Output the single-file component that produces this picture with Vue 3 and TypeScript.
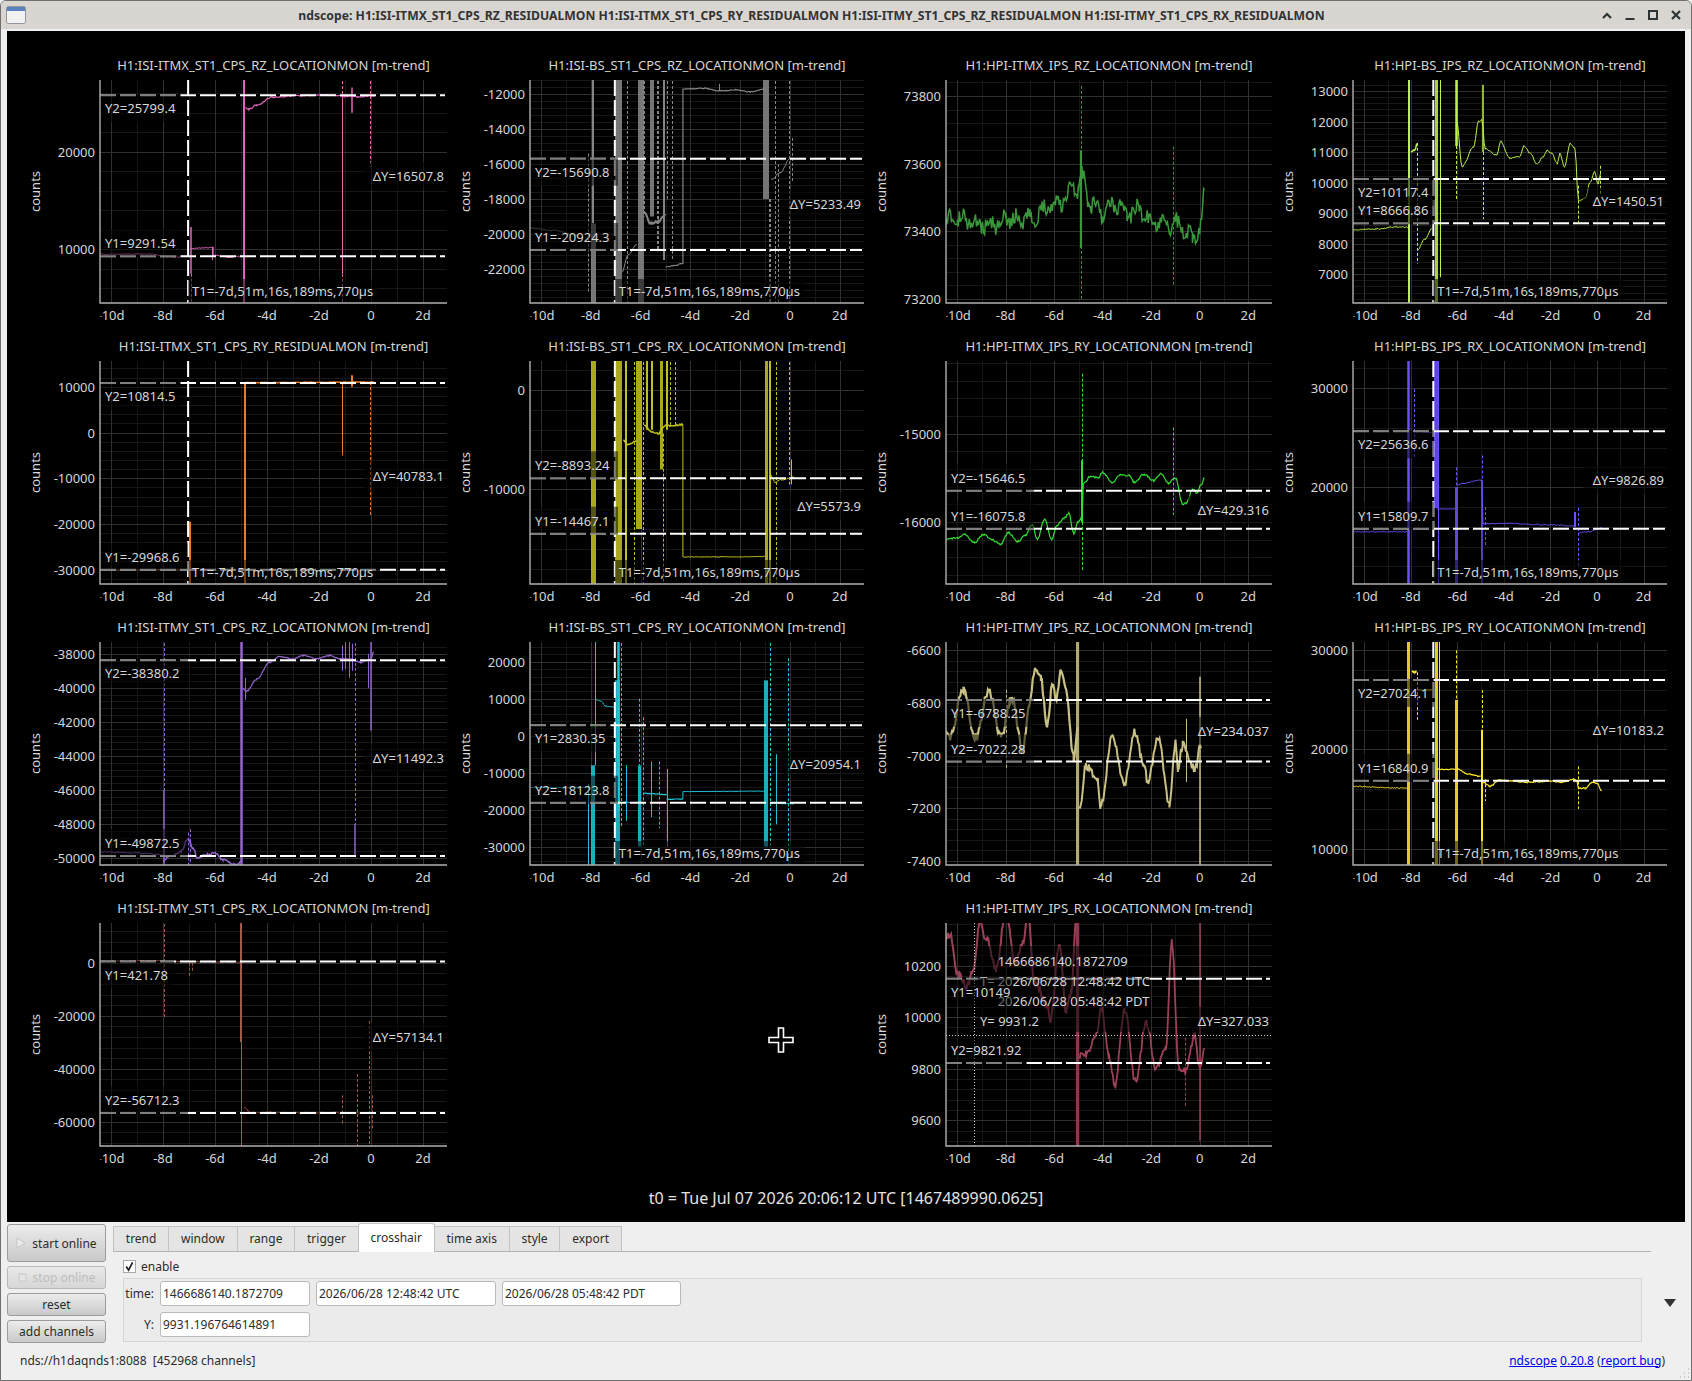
<script setup lang="ts">
type Pt = [number, number]
interface Line { p: Pt[]; n?: number; w?: number; o?: number; r?: number }
// day, high value, low value, width, dashed
type Spike = [number, number, number, number?, number?]
interface YLabel { t: string; y: number; above: boolean }
interface Spec {
  title: string
  color: string
  row: number
  col: number
  y: [Pt, Pt]
  step: number
  lines: Line[]
  spikes: Spike[]
  y1?: YLabel
  y2?: YLabel
  dy?: string
  t1?: boolean
  cross?: boolean
}

const T = 1e9
const B = -1e9
const tabs = ['trend', 'window', 'range', 'trigger', 'crosshair', 'time axis', 'style', 'export']

const cols = [
  { l: 7, w: 453, fl: 100, fr: 447, zero: 371, day: 26 },
  { l: 460, w: 416, fl: 530, fr: 864, zero: 790, day: 24.9 },
  { l: 876, w: 407, fl: 946, fr: 1272, zero: 1199.7, day: 24.24 },
  { l: 1283, w: 402, fl: 1353, fr: 1667, zero: 1597, day: 23.27 }
]

const specs: Spec[] = [
  {
    title: 'H1:ISI-ITMX_ST1_CPS_RZ_LOCATIONMON', color: '#e264bd', row: 0, col: 0,
    y: [[25799.4, 95.3], [9291.54, 256.3]], step: 10000,
    y1: { t: 'Y1=9291.54', y: 256.3, above: true }, y2: { t: 'Y2=25799.4', y: 95.3, above: false },
    dy: 'ΔY=16507.8', t1: true,
    lines: [
      { p: [[-10.85, 9500], [-8.5, 9520], [-7.8, 9250], [-7.1, 9300]], n: 110 },
      { p: [[-6.95, 10100], [-6.07, 10200], [-6.07, 9400], [-5.5, 9200], [-4.9, 9300]], n: 110 },
      { p: [[-4.83, 24600], [-4.7, 24350], [-4.4, 24800], [-3.8, 25600], [-3, 25750], [-1.5, 25850], [-1, 25700], [-0.5, 25650], [0.15, 25750]], n: 130, w: 1.2 }
    ],
    spikes: [[-4.87, T, B, 2], [-6.92, 12300, 7500, 1.5], [-6.92, 7500, B, 1, 1], [-1.1, T, 25500, 1, 1], [-1.1, 25500, 7500, 1], [-1.1, 8000, B, 1, 1], [-0.05, T, 18500, 1, 1], [-0.75, 26600, 24000, 1.5], [-6.1, 10200, 8900, 1]]
  },
  {
    title: 'H1:ISI-BS_ST1_CPS_RZ_LOCATIONMON', color: '#858585', row: 0, col: 1,
    y: [[-15690.8, 158.7], [-20924.3, 250]], step: 2000,
    y1: { t: 'Y1=-20924.3', y: 250, above: true }, y2: { t: 'Y2=-15690.8', y: 158.7, above: false },
    dy: 'ΔY=5233.49', t1: true,
    lines: [
      { p: [[-10.85, -19600], [-9.5, -19800], [-8.5, -20100]], n: 60 },
      { p: [[-6.75, -22200], [-6.5, -21200], [-6.15, -20600]], n: 40 },
      { p: [[-5.85, -18800], [-5.6, -19400], [-5.3, -19300], [-5, -18900]], n: 90, w: 2 },
      { p: [[-5, -21900], [-4.6, -21800], [-4.3, -21700], [-4.3, -11700], [-3.5, -11650], [-2.8, -11800], [-2.2, -11750], [-1.6, -11850], [-1, -11700]], n: 50, w: 1.2 },
      { p: [[-0.75, -16900], [-0.4, -16500], [0, -15700], [0.15, -15650]], n: 60 }
    ],
    spikes: [[-7.9, -19400, B, 5], [-7.9, T, -19400, 2], [-8.1, -15400, -23300, 1, 1], [-6.9, T, B, 7], [-6.55, T, B, 1, 1], [-6, T, B, 6], [-5.85, T, -19000, 2, 1], [-5.55, T, -19000, 4], [-5.3, T, -21000, 2, 1], [-5.05, T, -21500, 2], [-4.95, T, -18000, 1, 1], [-4.75, T, -21500, 1, 1], [-0.95, T, -18000, 6], [-0.8, -18000, B, 2, 1], [-0.6, T, B, 1, 1], [-0.5, -16000, B, 1, 1], [-0.05, T, B, 1, 1], [0.1, -14500, -17000, 1, 1], [-2.85, -11400, -11800, 1]]
  },
  {
    title: 'H1:HPI-ITMX_IPS_RZ_LOCATIONMON', color: '#3a983a', row: 0, col: 2,
    y: [[73800, 96], [73200, 299]], step: 200,
    lines: [
      { p: [[-10.85, 73400], [-10, 73440], [-9, 73420], [-8, 73430], [-7, 73440], [-6, 73470], [-5, 73530], [-4.9, 73560], [-4.5, 73480], [-4, 73460], [-3.5, 73480], [-3, 73450], [-2.5, 73460], [-2, 73430], [-1, 73420], [-0.3, 73380], [0, 73400], [0.2, 73510]], n: 46, w: 1.5, r: 16 }
    ],
    spikes: [[-4.9, 73830, 73200, 1, 1], [-4.9, 73640, 73350, 2], [-1.1, 73650, 73240, 1, 1]]
  },
  {
    title: 'H1:HPI-BS_IPS_RZ_LOCATIONMON', color: '#bcf24e', row: 0, col: 3,
    y: [[10117.4, 179], [8666.86, 223.3]], step: 1000,
    y1: { t: 'Y1=8666.86', y: 223.3, above: true }, y2: { t: 'Y2=10117.4', y: 179, above: false },
    dy: 'ΔY=1450.51', t1: true,
    lines: [
      { p: [[-10.85, 8450], [-9.5, 8480], [-8.6, 8550], [-8.1, 8530]], n: 40 },
      { p: [[-8, 11000], [-7.8, 11100], [-7.75, 11300]], n: 80, w: 1.5 },
      { p: [[-7.72, 7800], [-7.4, 8150], [-7.1, 8500]], n: 40 },
      { p: [[-6.03, 12000], [-5.8, 10520], [-5.3, 11170], [-5.1, 12000], [-4.95, 12050], [-4.8, 11100], [-4.3, 10900], [-4.15, 11350], [-3.75, 10800], [-3.3, 10850], [-3.15, 11200], [-2.85, 10950], [-2.6, 10600], [-2.3, 10850], [-2.15, 11050], [-1.95, 10950], [-1.7, 10620], [-1.6, 10950], [-1.4, 10520], [-1.15, 11280], [-0.95, 11120], [-0.8, 9430], [-0.5, 9480], [-0.3, 10000], [-0.1, 10350], [0.05, 9930], [0.15, 10300]], n: 45 }
    ],
    spikes: [[-8.07, T, B, 2], [-7.75, 11300, 7350, 1, 1], [-6.9, T, B, 3], [-6.75, T, 6900, 1], [-6.08, T, 11200, 2.5], [-6.08, 11200, 9400, 1, 1], [-4.92, 13200, 11000, 1.5], [-4.92, 11000, 8800, 1, 1], [-0.82, 9900, 8700, 1, 1], [0.15, 10550, 9600, 1, 1]]
  },
  {
    title: 'H1:ISI-ITMX_ST1_CPS_RY_RESIDUALMON', color: '#ee7a22', row: 1, col: 0,
    y: [[10814.5, 383], [-29968.6, 569.7]], step: 10000,
    y1: { t: 'Y1=-29968.6', y: 569.7, above: true }, y2: { t: 'Y2=10814.5', y: 383, above: false },
    dy: 'ΔY=40783.1', t1: true,
    lines: [
      { p: [[-4.85, 10900], [0.1, 11000]], n: 160, w: 1.5 },
      { p: [[-10.85, -30000], [-7, -29900]], w: 1, o: 0.7 }
    ],
    spikes: [[-4.85, 11000, B, 2], [-1.1, 11000, -5000, 1], [-0.05, 11000, -18000, 1, 1], [-0.75, 12500, 10000, 2], [-6.95, -19500, B, 2]]
  },
  {
    title: 'H1:ISI-BS_ST1_CPS_RX_LOCATIONMON', color: '#c0c01e', row: 1, col: 1,
    y: [[-8893.24, 478.3], [-14467.1, 533.7]], step: 10000,
    y1: { t: 'Y1=-14467.1', y: 533.7, above: true }, y2: { t: 'Y2=-8893.24', y: 478.3, above: true },
    dy: 'ΔY=5573.9', t1: true,
    lines: [
      { p: [[-6.7, -5100], [-6.5, -5500], [-6.15, -5100]], n: 100, w: 1.5 },
      { p: [[-5.85, -3500], [-5.6, -4200], [-5.3, -4400], [-5, -3600], [-4.3, -3500]], n: 140, w: 1.5 },
      { p: [[-4.3, -3500], [-4.3, -16800], [-3.5, -16800], [-2, -16800], [-1, -16750]], n: 50 },
      { p: [[-0.8, -8500], [-0.6, -9300], [-0.4, -9000], [0, -8900], [0.15, -8800]], n: 220 }
    ],
    spikes: [[-7.9, T, B, 5], [-6.9, T, B, 7], [-6.6, T, B, 2], [-6.28, T, B, 1, 1], [-6.05, T, -14000, 6], [-5.9, T, B, 1, 1], [-5.75, T, -4000, 2], [-5.55, T, -4000, 2], [-5.2, T, -8000, 3], [-5.1, -4400, B, 1, 1], [-4.95, T, -4000, 2], [-4.8, T, -3500, 1, 1], [-4.6, T, -3500, 1, 1], [-0.95, T, B, 3], [-0.8, T, B, 2], [-0.55, T, B, 1, 1], [-0.05, T, -9500, 1, 1], [0.05, -7000, -9500, 1]]
  },
  {
    title: 'H1:HPI-ITMX_IPS_RY_LOCATIONMON', color: '#32e032', row: 1, col: 2,
    y: [[-15646.5, 490.8], [-16075.8, 528.7]], step: 1000,
    y1: { t: 'Y1=-16075.8', y: 528.7, above: true }, y2: { t: 'Y2=-15646.5', y: 490.8, above: true },
    dy: 'ΔY=429.316',
    lines: [
      { p: [[-10.85, -16120], [-10.5, -16200], [-10, -16180], [-9.7, -16140], [-9.3, -16230], [-8.9, -16140], [-8.6, -16200], [-8.2, -16250], [-7.9, -16120], [-7.5, -16220], [-7.2, -16150], [-6.9, -16030], [-6.7, -16200], [-6.4, -15970], [-6.1, -16200], [-5.9, -16040], [-5.6, -15960], [-5.4, -15900], [-5.2, -16130], [-5, -15990], [-4.85, -15950], [-4.8, -15570], [-4.5, -15480], [-4.2, -15500], [-4, -15440], [-3.6, -15560], [-3.3, -15470], [-2.9, -15470], [-2.7, -15550], [-2.3, -15460], [-1.9, -15530], [-1.6, -15450], [-1.3, -15560], [-1, -15500], [-0.7, -15800], [-0.55, -15790], [-0.3, -15630], [-0.1, -15670], [0.05, -15580], [0.2, -15500]], n: 20, w: 1.2 }
    ],
    spikes: [[-4.85, -14320, -15500, 1, 1], [-4.85, -15300, -16000, 2], [-4.85, -16000, -16550, 1, 1], [-1.1, -14930, -15920, 1, 1]]
  },
  {
    title: 'H1:HPI-BS_IPS_RX_LOCATIONMON', color: '#6a50ff', row: 1, col: 3,
    y: [[25636.6, 431.3], [15809.7, 528.7]], step: 10000,
    y1: { t: 'Y1=15809.7', y: 528.7, above: true }, y2: { t: 'Y2=25636.6', y: 431.3, above: false },
    dy: 'ΔY=9826.89', t1: true,
    lines: [
      { p: [[-10.85, 15500], [-8.15, 15500]], n: 90 },
      { p: [[-7.8, 25600], [-7.1, 25500]], n: 90 },
      { p: [[-6.9, 17800], [-6.1, 17800]], n: 60 },
      { p: [[-6, 20200], [-5.8, 20400], [-5, 20700], [-4.95, 20700], [-4.9, 16300], [-4, 16350], [-2, 16200], [-1, 16100], [-0.9, 16000]], n: 90 },
      { p: [[-0.8, 15400], [-0.4, 15500], [0.2, 15900]], n: 90 }
    ],
    spikes: [[-8.12, T, B, 2.5], [-7.85, 29900, 22900, 1, 1], [-6.92, T, 17900, 4], [-6.82, T, B, 1], [-6.05, 22000, 20000, 1, 1], [-6.05, 20000, B, 3], [-4.95, 23200, 20700, 1, 1], [-4.95, 20700, B, 1.5], [-4.8, 18000, 14000, 1, 1], [-0.95, 17500, 16000, 2], [-0.8, 17900, 12000, 1, 1]]
  },
  {
    title: 'H1:ISI-ITMY_ST1_CPS_RZ_LOCATIONMON', color: '#9464cc', row: 2, col: 0,
    y: [[-38380.2, 660.3], [-49872.5, 855.9]], step: 2000,
    y1: { t: 'Y1=-49872.5', y: 855.9, above: true }, y2: { t: 'Y2=-38380.2', y: 660.3, above: false },
    dy: 'ΔY=11492.3',
    lines: [
      { p: [[-10.85, -49600], [-9, -49700], [-8, -49800]], n: 90 },
      { p: [[-8, -50100], [-7.7, -49900], [-7.3, -49600], [-7.05, -48900], [-6.8, -49500], [-6.7, -50000], [-6.3, -49800], [-6, -49700], [-5.7, -50100], [-5.2, -50400], [-5, -50200]], n: 110, w: 1.5 },
      { p: [[-4.95, -40000], [-4.8, -40200], [-4.4, -39500], [-3.9, -38500], [-3.5, -38150], [-3, -38300], [-2.6, -38100], [-2.1, -38300], [-1.6, -38100], [-1.2, -38300], [-0.8, -38300], [-0.4, -38500], [0, -38300], [0.1, -37900]], n: 70, w: 1.2 }
    ],
    spikes: [[-7.97, T, -46000, 1, 1], [-7.97, -46000, B, 1.5], [-5, T, B, 2.5], [-0.6, T, -48000, 1, 1], [-0.6, -48000, -49800, 1.5], [0, T, -42500, 1.5], [-7.05, -48500, B, 1, 1], [-6.95, -48300, B, 1, 1], [-1.1, -37500, -39000, 1], [-1, -37300, -38900, 1], [-0.85, -37300, -39400, 1], [-0.75, -37400, -39000, 1], [-0.1, -38000, -40000, 1], [-4.85, -39400, -40700, 1]]
  },
  {
    title: 'H1:ISI-BS_ST1_CPS_RY_LOCATIONMON', color: '#22c2da', row: 2, col: 1,
    y: [[2830.35, 725.3], [-18123.8, 802.7]], step: 10000,
    y1: { t: 'Y1=2830.35', y: 725.3, above: false }, y2: { t: 'Y2=-18123.8', y: 802.7, above: true },
    dy: 'ΔY=20954.1', t1: true,
    lines: [
      { p: [[-7.82, 9800], [-7.6, 9400], [-7.4, 8000], [-7, 7800]], n: 250 },
      { p: [[-10.85, -14000], [-8.1, -14000]], n: 160 },
      { p: [[-6.7, -18000], [-5.9, -18100]], n: 160 },
      { p: [[-5.9, -15600], [-4.95, -15900]], n: 200, w: 1.2 },
      { p: [[-4.95, -17200], [-4.3, -17100]], n: 120, w: 1.2 },
      { p: [[-4.3, -17100], [-4.3, -15100], [-1, -15000]], n: 120 },
      { p: [[-0.8, -18300], [0.15, -18400]], n: 250 }
    ],
    spikes: [[-7.82, T, -8000, 1], [-7.9, -8000, B, 4], [-8.1, -13000, -35000, 1], [-6.95, 15000, B, 5], [-6.9, T, -20000, 2.5], [-6.8, T, -25000, 1, 1], [-6.6, -8000, -23000, 1], [-6.05, -8000, -30000, 3], [-6.05, 10000, -8000, 1, 1], [-5.9, 5000, -30000, 1, 1], [-5.57, -7000, -22000, 1], [-5.26, -7000, -25000, 1, 1], [-4.95, -9000, -30000, 1], [-0.95, 15000, -30000, 4], [-0.8, T, -30000, 1, 1], [-0.55, -5000, -24000, 1], [-0.08, 21000, B, 1, 1]]
  },
  {
    title: 'H1:HPI-ITMY_IPS_RZ_LOCATIONMON', color: '#c8c084', row: 2, col: 2,
    y: [[-6788.25, 699.9], [-7022.28, 761.5]], step: 200,
    y1: { t: 'Y1=-6788.25', y: 699.9, above: false }, y2: { t: 'Y2=-7022.28', y: 761.5, above: true },
    dy: 'ΔY=234.037',
    lines: [
      { p: [[-10.85, -6880], [-10.3, -6930], [-9.75, -6750], [-9.25, -6930], [-8.7, -6750], [-8.2, -6930], [-7.75, -6780], [-7.3, -6980], [-7.05, -6820], [-6.8, -6680], [-6.55, -6710], [-6.3, -6880], [-6.05, -6720], [-5.95, -6790], [-5.7, -6680], [-5.5, -6760], [-5.2, -7010], [-5.05, -6900]], n: 30, w: 2.2 },
      { p: [[-4.95, -7200], [-4.7, -7040], [-4.2, -7090], [-4.1, -7200], [-3.6, -6930], [-3.1, -7110], [-2.7, -6910], [-2.3, -7030], [-2.15, -7100], [-1.7, -6930], [-1.25, -7190], [-1, -6950], [-0.9, -7050], [-0.7, -6960], [-0.2, -7050], [0.05, -6960]], n: 28, w: 2 }
    ],
    spikes: [[-5.05, T, B, 3], [0.03, -6700, B, 1.5], [-8, -6750, -7050, 1, 1], [-0.55, -6860, -7100, 1]]
  },
  {
    title: 'H1:HPI-BS_IPS_RY_LOCATIONMON', color: '#ffe822', row: 2, col: 3,
    y: [[27024.1, 679.9], [16840.9, 780.8]], step: 10000,
    y1: { t: 'Y1=16840.9', y: 780.8, above: true }, y2: { t: 'Y2=27024.1', y: 679.9, above: false },
    dy: 'ΔY=10183.2', t1: true,
    lines: [
      { p: [[-10.85, 16300], [-8.15, 16100]], n: 90 },
      { p: [[-7.95, 27800], [-7.75, 27800]], n: 200, w: 2 },
      { p: [[-7.7, 26000], [-7, 26000]], n: 70 },
      { p: [[-6.9, 18000], [-6, 18000], [-5.5, 17500], [-5, 17300]], n: 90, w: 1.2 },
      { p: [[-4.9, 16700], [-4.6, 16300], [-4.2, 16900], [-3, 16700], [-2, 16800], [-1.5, 16700], [-1, 17000], [-0.85, 16800], [-0.8, 16100], [-0.5, 16100], [-0.2, 16700], [0, 16600], [0.2, 15800]], n: 110, w: 1.2 }
    ],
    spikes: [[-8.12, T, B, 3], [-7.75, 27800, 23000, 1, 1], [-6.92, T, B, 3], [-6.8, T, B, 1], [-6.05, 30000, 25000, 1, 1], [-6.05, 25000, B, 3], [-4.93, 26000, 22000, 1, 1], [-4.93, 22000, B, 2], [-4.8, 17000, 14800, 1, 1], [-0.8, 18300, 14000, 1, 1]]
  },
  {
    title: 'H1:ISI-ITMY_ST1_CPS_RX_LOCATIONMON', color: '#a45a4a', row: 3, col: 0,
    y: [[421.78, 961.6], [-56712.3, 1113.1]], step: 20000,
    y1: { t: 'Y1=421.78', y: 961.6, above: false }, y2: { t: 'Y2=-56712.3', y: 1113.1, above: true },
    dy: 'ΔY=57134.1',
    lines: [
      { p: [[-10.85, 500], [-8, 700]], n: 400 },
      { p: [[-8, 500], [-4.95, 300]], n: 400 },
      { p: [[-4.9, -54700], [-4.6, -56500], [0.1, -56600]], n: 500 }
    ],
    spikes: [[-7.98, T, -21000, 1, 1], [-7, 0, -5000, 1, 1], [-6.9, 0, -3500, 1, 1], [-5, T, -30000, 2], [-5, -30000, B, 1], [-1.1, -50000, -61000, 1, 1], [-0.55, -42000, B, 1, 1], [-0.08, -22000, B, 1, 1], [0.03, -50000, -63000, 1, 1]]
  },
  {
    title: 'H1:HPI-ITMY_IPS_RX_LOCATIONMON', color: '#9c4058', row: 3, col: 2,
    y: [[10149, 978.7], [9821.92, 1063]], step: 200,
    y1: { t: 'Y1=10149', y: 978.7, above: false }, y2: { t: 'Y2=9821.92', y: 1063, above: true },
    dy: 'ΔY=327.033', cross: true,
    lines: [
      { p: [[-10.85, 10120], [-10.6, 10290], [-10.3, 10320], [-9.95, 10160], [-9.6, 10120], [-9.3, 10200], [-9.1, 10370], [-8.8, 10300], [-8.4, 10190], [-8, 10400], [-7.6, 10200], [-7.3, 10290], [-7.1, 10400], [-6.8, 10130], [-6.3, 10050], [-6.15, 9990], [-5.8, 10280], [-5.5, 10020], [-5.3, 10100], [-5.1, 10380]], n: 30, w: 2 },
      { p: [[-4.95, 9850], [-4.7, 9860], [-4.3, 9920], [-4.05, 10040], [-3.75, 9850], [-3.5, 9740], [-3.1, 10030], [-2.65, 9750], [-2.2, 9980], [-1.8, 9800], [-1.4, 9880], [-1.15, 10290], [-0.85, 9800], [-0.6, 9790], [-0.2, 9930], [0, 9800], [0.2, 9880]], n: 28, w: 1.8 }
    ],
    spikes: [[-5.05, T, B, 3], [0.02, T, 9520, 1.5], [-0.6, 9920, 9650, 1, 1]]
  }
]

// small seeded generator so the noise is the same on every load
let seed = 20260707
function rnd() {
  seed = (seed * 1664525 + 1013904223) % 4294967296
  return seed / 4294967296 - 0.5
}

const snap = (v: number) => Math.round(v) + 0.5

function buildPlot(s: Spec) {
  const c = cols[s.col]
  const top = 80 + 281 * s.row
  const bottom = top + 223
  const scale = (s.y[0][1] - s.y[1][1]) / (s.y[0][0] - s.y[1][0])
  const yOf = (v: number) => {
    if (v === T) return top - 4
    if (v === B) return bottom + 4
    return s.y[0][1] + (v - s.y[0][0]) * scale
  }
  const xOf = (d: number) => c.zero + d * c.day

  const traces = s.lines.map((l) => {
    let d = ''
    for (let i = 0; i < l.p.length - 1; i++) {
      const [x0, v0] = l.p[i]
      const [x1, v1] = l.p[i + 1]
      const n = Math.max(1, Math.round((x1 - x0) * c.day))
      for (let k = 0; k <= n; k++) {
        const ease = (1 - Math.cos((Math.PI * k) / n)) / 2
        const day = x0 + ((x1 - x0) * k) / n
        const ripple = (l.r ?? 0) * Math.sin(day * 11.4)
        const v = v0 + (v1 - v0) * ease + ripple + rnd() * (l.n ?? 0)
        const cmd = d ? 'L' : 'M'
        d += `${cmd}${xOf(day).toFixed(1)} ${yOf(v).toFixed(1)}`
      }
    }
    return { d, w: l.w ?? 1, o: l.o ?? 1 }
  })
  const spikes = s.spikes.map((k) => {
    const w = k[3] ?? 1
    return {
      x: Math.round(xOf(k[0])) + (Math.round(w) % 2 ? 0.5 : 0),
      y1: yOf(k[1]),
      y2: yOf(k[2]),
      w,
      dash: k[4] ? '3 2' : undefined,
      o: w >= 3 ? 0.88 : 1
    }
  })

  const vMin = s.y[0][0] + (bottom - s.y[0][1]) / scale
  const vMax = s.y[0][0] + (top - s.y[0][1]) / scale
  const yTicks: { y: number; label: string }[] = []
  let minor = ''
  const minorStep = s.step / 5
  for (let k = Math.ceil(vMin / minorStep); k * minorStep <= vMax; k++) {
    const y = snap(yOf(k * minorStep))
    if (k % 5 === 0) yTicks.push({ y, label: String(k * minorStep) })
    else minor += `M${c.fl} ${y}H${c.fr}`
  }
  let major = yTicks.map((t) => `M${c.fl} ${t.y}H${c.fr}`).join('')
  const xTicks: { x: number; label: string }[] = []
  for (let d = -10; d <= 2; d++) {
    const x = xOf(d)
    if (d % 2 === 0) {
      major += `M${snap(x)} ${top}V${bottom}`
      xTicks.push({ x, label: d === 0 ? '0' : `${d}d` })
    } else {
      minor += `M${snap(x)} ${top}V${bottom}`
    }
  }

  const labels = [s.y1, s.y2].filter((l): l is YLabel => !!l).map((l) => {
    const cy = l.y + (l.above ? -13 : 13)
    return { t: l.t, cy, w: l.t.length * 7 + 11 }
  })
  const tx = xOf(-7.035)
  return {
    ...s, c, top, bottom, traces, spikes, yTicks, xTicks, minor, major, labels, tx,
    id: `p${s.row}${s.col}`,
    left: c.l,
    cellTop: top - 29,
    cursorLines: [s.y1, s.y2].filter((l): l is YLabel => !!l).map((l) => l.y),
    dyY: s.y1 && s.y2 ? (s.y1.y + s.y2.y) / 2 : 0
  }
}

const slots = [0, 1, 2, 3].flatMap((row) =>
  [0, 1, 2, 3].map((col) => {
    const s = specs.find((p) => p.row === row && p.col === col)
    return s ? buildPlot(s) : null
  })
)
</script>

<template>
  <div class="window">
    <div class="titlebar">
      <svg class="app-icon" width="20" height="18" viewBox="0 0 20 18">
        <rect x="0.5" y="0.5" width="19" height="17" rx="2" fill="#f1f1f1" stroke="#8f959c" />
        <rect x="1" y="1" width="18" height="4" fill="#5a83bd" />
      </svg>
      <div class="title">ndscope: H1:ISI-ITMX_ST1_CPS_RZ_RESIDUALMON H1:ISI-ITMX_ST1_CPS_RY_RESIDUALMON H1:ISI-ITMY_ST1_CPS_RZ_RESIDUALMON H1:ISI-ITMY_ST1_CPS_RX_RESIDUALMON</div>
      <div class="wm-buttons">
        <svg width="12" height="12" viewBox="0 0 12 12"><path d="M2 9l4-4 4 4" fill="none" stroke="#2e3436" stroke-width="2.2" /></svg>
        <svg width="12" height="12" viewBox="0 0 12 12"><path d="M1.5 10h9" fill="none" stroke="#2e3436" stroke-width="2" /></svg>
        <svg width="12" height="12" viewBox="0 0 12 12"><rect x="2" y="2" width="8" height="8" fill="none" stroke="#2e3436" stroke-width="2" /></svg>
        <svg width="12" height="12" viewBox="0 0 12 12"><path d="M2 2l8 8M10 2l-8 8" fill="none" stroke="#2e3436" stroke-width="2.2" /></svg>
      </div>
    </div>

    <div class="canvas">
      <div class="plots">
        <div v-for="(p, i) in slots" :key="i" class="cell">
          <svg
            v-if="p"
            :width="p.c.w"
            height="281"
            :viewBox="`${p.left} ${p.cellTop} ${p.c.w} 281`"
          >
            <defs>
              <clipPath :id="p.id">
                <rect :x="p.c.fl" :y="p.top" :width="p.c.fr - p.c.fl" height="223" />
              </clipPath>
              <clipPath :id="`${p.id}x`">
                <rect :x="p.c.fl + 0.5" :y="p.bottom" :width="p.c.fr - p.c.fl + 20" height="30" />
              </clipPath>
            </defs>
            <text
              class="txt"
              :x="(p.c.fl + p.c.fr) / 2"
              :y="p.top - 15"
              text-anchor="middle"
              dominant-baseline="central"
            >{{ p.title }} [m-trend]</text>
            <text
              class="txt"
              text-anchor="middle"
              dominant-baseline="central"
              :transform="`translate(${p.c.fl - 65} ${(p.top + p.bottom) / 2}) rotate(-90)`"
            >counts</text>
            <path class="grid-minor" :d="p.minor" />
            <path class="grid-major" :d="p.major" />

            <g :clip-path="`url(#${p.id})`">
              <path
                v-for="(s, k) in p.spikes"
                :key="`s${k}`"
                :d="`M${s.x} ${s.y1}V${s.y2}`"
                fill="none"
                :stroke="p.color"
                :stroke-width="s.w"
                :stroke-dasharray="s.dash"
                :opacity="s.o"
              />
              <path
                v-for="(t, k) in p.traces"
                :key="`t${k}`"
                :d="t.d"
                fill="none"
                :stroke="p.color"
                :stroke-width="t.w"
                :opacity="t.o"
              />
              <path
                v-for="y in p.cursorLines"
                :key="`c${y}`"
                class="cursor"
                :d="`M${p.c.fl} ${y}H${p.c.fr - 2}`"
              />
              <path v-if="p.t1" class="cursor" :d="`M${p.tx} ${p.top}V${p.bottom}`" />
              <g v-if="p.cross">
                <path class="dotted" d="M974.5 923V1146M946 1035.5H1272" />
                <rect class="shade" x="978" y="946" width="172" height="86" />
                <text class="txt" x="997.7" y="960.7" dominant-baseline="central">1466686140.1872709</text>
                <text class="txt" x="980" y="981" dominant-baseline="central">T=</text>
                <text class="txt" x="997.7" y="981" dominant-baseline="central">2026/06/28 12:48:42 UTC</text>
                <text class="txt" x="997.7" y="1000.7" dominant-baseline="central">2026/06/28 05:48:42 PDT</text>
                <text class="txt" x="980" y="1020.7" dominant-baseline="central">Y= 9931.2</text>
              </g>
              <g v-for="l in p.labels" :key="l.t">
                <rect class="shade" :x="p.c.fl" :y="l.cy - 14" :width="l.w" height="28" />
                <text class="txt" :x="p.c.fl + 5" :y="l.cy" dominant-baseline="central">{{ l.t }}</text>
              </g>
              <g v-if="p.dy">
                <rect class="shade" :x="p.c.fr - 84" :y="p.dyY - 14" width="84" height="28" />
                <text class="txt" :x="p.c.fr - 3" :y="p.dyY" text-anchor="end" dominant-baseline="central">{{ p.dy }}</text>
              </g>
              <g v-if="p.t1">
                <rect class="shade" :x="p.tx" :y="p.bottom - 24" width="190" height="24" />
                <text class="txt" :x="p.tx + 4" :y="p.bottom - 12" dominant-baseline="central">T1=-7d,51m,16s,189ms,770µs</text>
              </g>
            </g>

            <path class="axis" :d="`M${p.c.fl} ${p.top}V${p.bottom}H${p.c.fr}`" />
            <text
              v-for="t in p.yTicks"
              :key="t.label"
              class="txt"
              :x="p.c.fl - 5"
              :y="t.y - 0.8"
              text-anchor="end"
              dominant-baseline="central"
            >{{ t.label }}</text>
            <g :clip-path="`url(#${p.id}x)`">
              <text
                v-for="t in p.xTicks"
                :key="t.label"
                class="txt"
                :x="t.x"
                :y="p.bottom + 12"
                text-anchor="middle"
                dominant-baseline="central"
              >{{ t.label }}</text>
            </g>
          </svg>
        </div>
      </div>
      <div class="t0">t0 = Tue Jul 07 2026 20:06:12 UTC [1467489990.0625]</div>
      <svg class="mouse" width="26" height="26" viewBox="0 0 26 26">
        <path
          d="M10.5 1h5v9.5H25v5h-9.5V25h-5v-9.5H1v-5h9.5z"
          fill="#000"
          stroke="#fff"
          stroke-width="1.6"
        />
      </svg>
    </div>

    <div class="panel">
      <div class="actions">
        <button class="btn tall">
          <svg width="10" height="12" viewBox="0 0 10 12"><path d="M1 1l8 5-8 5z" fill="#ececec" stroke="#c4c4c4" /></svg>
          start online
        </button>
        <button class="btn off">
          <svg width="9" height="9" viewBox="0 0 9 9"><rect x="1" y="1" width="7" height="7" fill="#e4e4e4" stroke="#c8c8c8" /></svg>
          stop online
        </button>
        <button class="btn">reset</button>
        <button class="btn">add channels</button>
      </div>

      <div class="tab-area">
        <div class="tabs">
          <div v-for="t in tabs" :key="t" class="tab" :class="{ active: t === 'crosshair' }">{{ t }}</div>
        </div>
        <div class="pane">
          <label class="enable">
            <span class="check">
              <svg width="13" height="13" viewBox="0 0 13 13"><path d="M3.2 6.5l2.4 3.6L9.6 2.4" fill="none" stroke="#222" stroke-width="1.8" /></svg>
            </span>
            enable
          </label>
          <div class="group">
            <span class="lbl">time:</span>
            <input class="field f1" value="1466686140.1872709" />
            <input class="field f2" value="2026/06/28 12:48:42 UTC" />
            <input class="field f3" value="2026/06/28 05:48:42 PDT" />
            <span class="lbl">Y:</span>
            <input class="field f1" value="9931.196764614891" />
          </div>
        </div>
      </div>

      <div class="collapse">
        <svg width="12" height="8" viewBox="0 0 12 8"><path d="M0 0h12L6 8z" fill="#333" /></svg>
      </div>
    </div>

    <div class="status">
      <span>nds://h1daqnds1:8088&nbsp;&nbsp;[452968 channels]</span>
      <span class="links"><a>ndscope</a> <a>0.20.8</a> (<a>report bug</a>)</span>
      <svg class="grip" width="12" height="12" viewBox="0 0 12 12">
        <path d="M10 2h1M10 6h1M10 10h1M6 6h1M6 10h1M2 10h1" stroke="#a8a8a8" stroke-width="1" />
      </svg>
    </div>
  </div>
</template>

<style>
html,
body {
  margin: 0;
  background: #efefef;
  overflow: hidden;
}
</style>

<style scoped>
.window {
  width: 1692px;
  height: 1381px;
  box-sizing: border-box;
  display: flex;
  flex-direction: column;
  position: relative;
  background: #efefef;
  border: 1px solid #6f6f6f;
  border-radius: 6px 6px 0 0;
  overflow: hidden;
  font-family: "Noto Sans", sans-serif;
  font-size: 12px;
  color: #2c2c2c;
}

.titlebar {
  height: 28px;
  flex: none;
  display: flex;
  align-items: center;
  background: #d9d6d2;
  margin-bottom: 2px;
  padding: 0 9px 0 5px;
}

.app-icon {
  flex: none;
}

.title {
  flex: 1;
  text-align: center;
  font-weight: 700;
  font-size: 12.2px;
  color: #333;
  white-space: nowrap;
  padding-right: 4px;
}

.wm-buttons {
  flex: none;
  width: 81px;
  display: flex;
  justify-content: space-between;
}

.canvas {
  flex: none;
  height: 1191px;
  margin: 0 6px;
  box-sizing: border-box;
  padding-top: 20px;
  background: #000;
  position: relative;
}

.plots {
  display: grid;
  grid-template-columns: 453px 416px 407px 402px;
  grid-auto-rows: 281px;
}

.cell svg {
  display: block;
  overflow: visible;
}

.txt {
  font-family: "Noto Sans", sans-serif;
  font-size: 13px;
  fill: #d6d6d6;
}

.grid-major {
  fill: none;
  stroke: #303030;
  stroke-width: 1;
}

.grid-minor {
  fill: none;
  stroke: #171717;
  stroke-width: 1;
}

.axis {
  fill: none;
  stroke: #b0b0b0;
  stroke-width: 1.4;
}

.cursor {
  fill: none;
  stroke: #fff;
  stroke-width: 2;
  stroke-dasharray: 16 4;
}

.dotted {
  fill: none;
  stroke: #cfcfcf;
  stroke-width: 1;
  stroke-dasharray: 1 2;
}

.shade {
  fill: rgba(0, 0, 0, 0.5);
}

.t0 {
  text-align: center;
  color: #e4e4e4;
  font-size: 16px;
  line-height: 46px;
}

.mouse {
  position: absolute;
  left: 761px;
  top: 996px;
}

.panel {
  flex: 1;
  display: flex;
  padding: 2px 0 0 6px;
  min-height: 0;
}

.actions {
  width: 99px;
  flex: none;
  display: flex;
  flex-direction: column;
  gap: 4px;
  margin-right: 7px;
}

.btn {
  height: 23px;
  flex: none;
  display: flex;
  align-items: center;
  justify-content: center;
  gap: 6px;
  padding: 0;
  font: inherit;
  color: #2c2c2c;
  background: linear-gradient(#ececec, #c9c9c9);
  border: 1px solid #9c9c9c;
  border-radius: 3px;
}

.btn.tall {
  height: 38px;
}

.btn.off {
  color: #bdbdbd;
  background: linear-gradient(#e9e9e9, #d6d6d6);
  border-color: #b8b8b8;
}

.tab-area {
  width: 1538px;
  flex: none;
}

.tabs {
  display: flex;
  height: 28px;
  align-items: flex-end;
  box-sizing: border-box;
  border-bottom: 1px solid #b4b4b4;
}

.tab {
  height: 25px;
  box-sizing: border-box;
  padding: 0 11.8px;
  line-height: 23px;
  background: #e4e4e4;
  border: 1px solid #c2c2c2;
  border-bottom: none;
  margin-left: -1px;
}

.tab:first-child {
  margin-left: 0;
}

.tab.active {
  height: 29px;
  margin-bottom: -1px;
  line-height: 27px;
  background: #fff;
  border-radius: 3px 3px 0 0;
}

.pane {
  padding: 6px 9px 0 10px;
}

.enable {
  display: flex;
  align-items: center;
  gap: 5px;
  height: 16px;
  margin-bottom: 4px;
}

.check {
  width: 13px;
  height: 13px;
  background: #fff;
  border: 1px solid #a8a8a8;
  box-sizing: border-box;
  display: flex;
  align-items: center;
  justify-content: center;
}

.check svg {
  flex: none;
}

.group {
  height: 64px;
  box-sizing: border-box;
  padding: 2px 0 0 0;
  background: #ebebeb;
  border: 1px solid #d6d6d6;
  display: grid;
  grid-template-columns: 30px 150px 180px 179px;
  grid-auto-rows: 25px;
  column-gap: 6px;
  row-gap: 6px;
  align-items: center;
}

.lbl {
  text-align: right;
}

.field {
  height: 25px;
  box-sizing: border-box;
  padding: 0 2px;
  font: inherit;
  color: #2c2c2c;
  background: #fff;
  border: 1px solid #b9b9b9;
  border-radius: 3px;
  outline: none;
  min-width: 0;
  width: 100%;
}

.collapse {
  flex: 1;
  display: flex;
  justify-content: flex-start;
  padding: 75px 0 0 13px;
}

.status {
  flex: none;
  height: 36px;
  display: flex;
  align-items: center;
  justify-content: space-between;
  padding: 0 26px 4px 19px;
  box-sizing: border-box;
  position: relative;
}

.links a {
  color: #0000ee;
  text-decoration: underline;
}

.grip {
  position: absolute;
  right: 1px;
  bottom: 1px;
}
</style>
